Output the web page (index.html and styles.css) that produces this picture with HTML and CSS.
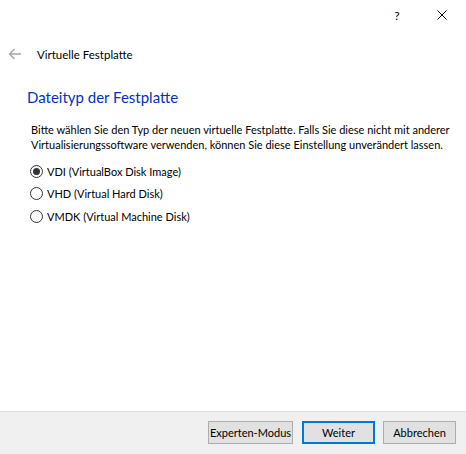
FILE: index.html
```html
<!DOCTYPE html>
<html lang="de">
<head>
<meta charset="utf-8">
<title>Virtuelle Festplatte</title>
<link rel="stylesheet" href="styles.css">
</head>
<body>
<div class="window">
  <div class="titlebar">
    <div class="tb-btn help">?</div>
    <div class="tb-btn close">
      <svg width="10" height="10" viewBox="0 0 10 10"><path d="M0.5 0.5 L9.5 9.5 M9.5 0.5 L0.5 9.5" stroke="#000" stroke-width="1" fill="none"/></svg>
    </div>
  </div>
  <div class="header">
    <svg class="back" width="14" height="12" viewBox="0 0 14 12"><path d="M13 6 H1.5 M6.5 1 L1.5 6 L6.5 11" stroke="#a6a6a6" stroke-width="1.4" fill="none"/></svg>
    <span class="header-title">Virtuelle Festplatte</span>
  </div>
  <div class="content">
    <h1 class="heading">Dateityp der Festplatte</h1>
    <p class="desc">Bitte wählen Sie den Typ der neuen virtuelle Festplatte. Falls Sie diese nicht mit anderer Virtualisierungssoftware verwenden, können Sie diese Einstellung unverändert lassen.</p>
    <div class="options">
      <div class="option"><span class="radio checked"></span><span class="label">VDI (VirtualBox Disk Image)</span></div>
      <div class="option"><span class="radio"></span><span class="label">VHD (Virtual Hard Disk)</span></div>
      <div class="option"><span class="radio"></span><span class="label">VMDK (Virtual Machine Disk)</span></div>
    </div>
  </div>
  <div class="footer">
    <div class="btn expert">Experten-Modus</div>
    <div class="btn default">Weiter</div>
    <div class="btn">Abbrechen</div>
  </div>
</div>
</body>
</html>
```

FILE: styles.css
```css
html, body {
  margin: 0;
  padding: 0;
  background: #ffffff;
}
.window {
  width: 466px;
  height: 454px;
  display: flex;
  flex-direction: column;
  font-family: Lato, "Noto Sans", sans-serif;
  font-size: 11px;
  color: #000;
  overflow: hidden;
}
.titlebar {
  height: 30px;
  display: flex;
  justify-content: flex-end;
  flex: none;
}
.tb-btn {
  width: 46px;
  height: 30px;
  display: flex;
  align-items: center;
  justify-content: center;
}
.help {
  font-size: 12px;
}
.close {
  width: 44px;
  padding-right: 2px;
}
.header {
  flex: none;
  margin-top: 10px;
  height: 28px;
  display: flex;
  align-items: center;
  padding-left: 8px;
}
.back {
  display: block;
}
.header-title {
  margin-left: 15px;
  font-size: 11.5px;
}
.content {
  flex: 1;
  padding-left: 27px;
}
.heading {
  margin: 18px 0 0 0;
  font-size: 15px;
  font-weight: normal;
  color: #0033bc;
  line-height: 22px;
}
.desc {
  margin: 14px 0 0 4px;
  line-height: 15px;
  width: 430px;
}
.options {
  margin-top: 8px;
  margin-left: 3px;
  display: flex;
  flex-direction: column;
}
.option {
  height: 22.5px;
  display: flex;
  align-items: center;
}
.radio {
  width: 11px;
  height: 11px;
  border: 1px solid #333;
  border-radius: 50%;
  box-sizing: content-box;
  display: flex;
  align-items: center;
  justify-content: center;
  background: #fff;
}
.radio.checked::after {
  content: "";
  width: 7px;
  height: 7px;
  border-radius: 50%;
  background: #333;
}
.label {
  margin-left: 4px;
}
.footer {
  flex: none;
  height: 43px;
  border-top: 1px solid #dfdfdf;
  background: #f0f0f0;
  display: flex;
  justify-content: flex-end;
  align-items: flex-start;
  padding-top: 9px;
  padding-right: 10px;
  gap: 8px;
  box-sizing: border-box;
}
.btn {
  height: 23px;
  width: 73px;
  box-sizing: border-box;
  border: 1px solid #adadad;
  background: #e1e1e1;
  display: flex;
  align-items: center;
  justify-content: center;
  white-space: nowrap;
}
.btn.expert {
  width: 85px;
  margin-right: 1px;
}
.btn.default {
  border: 2px solid #0078d7;
}
```
